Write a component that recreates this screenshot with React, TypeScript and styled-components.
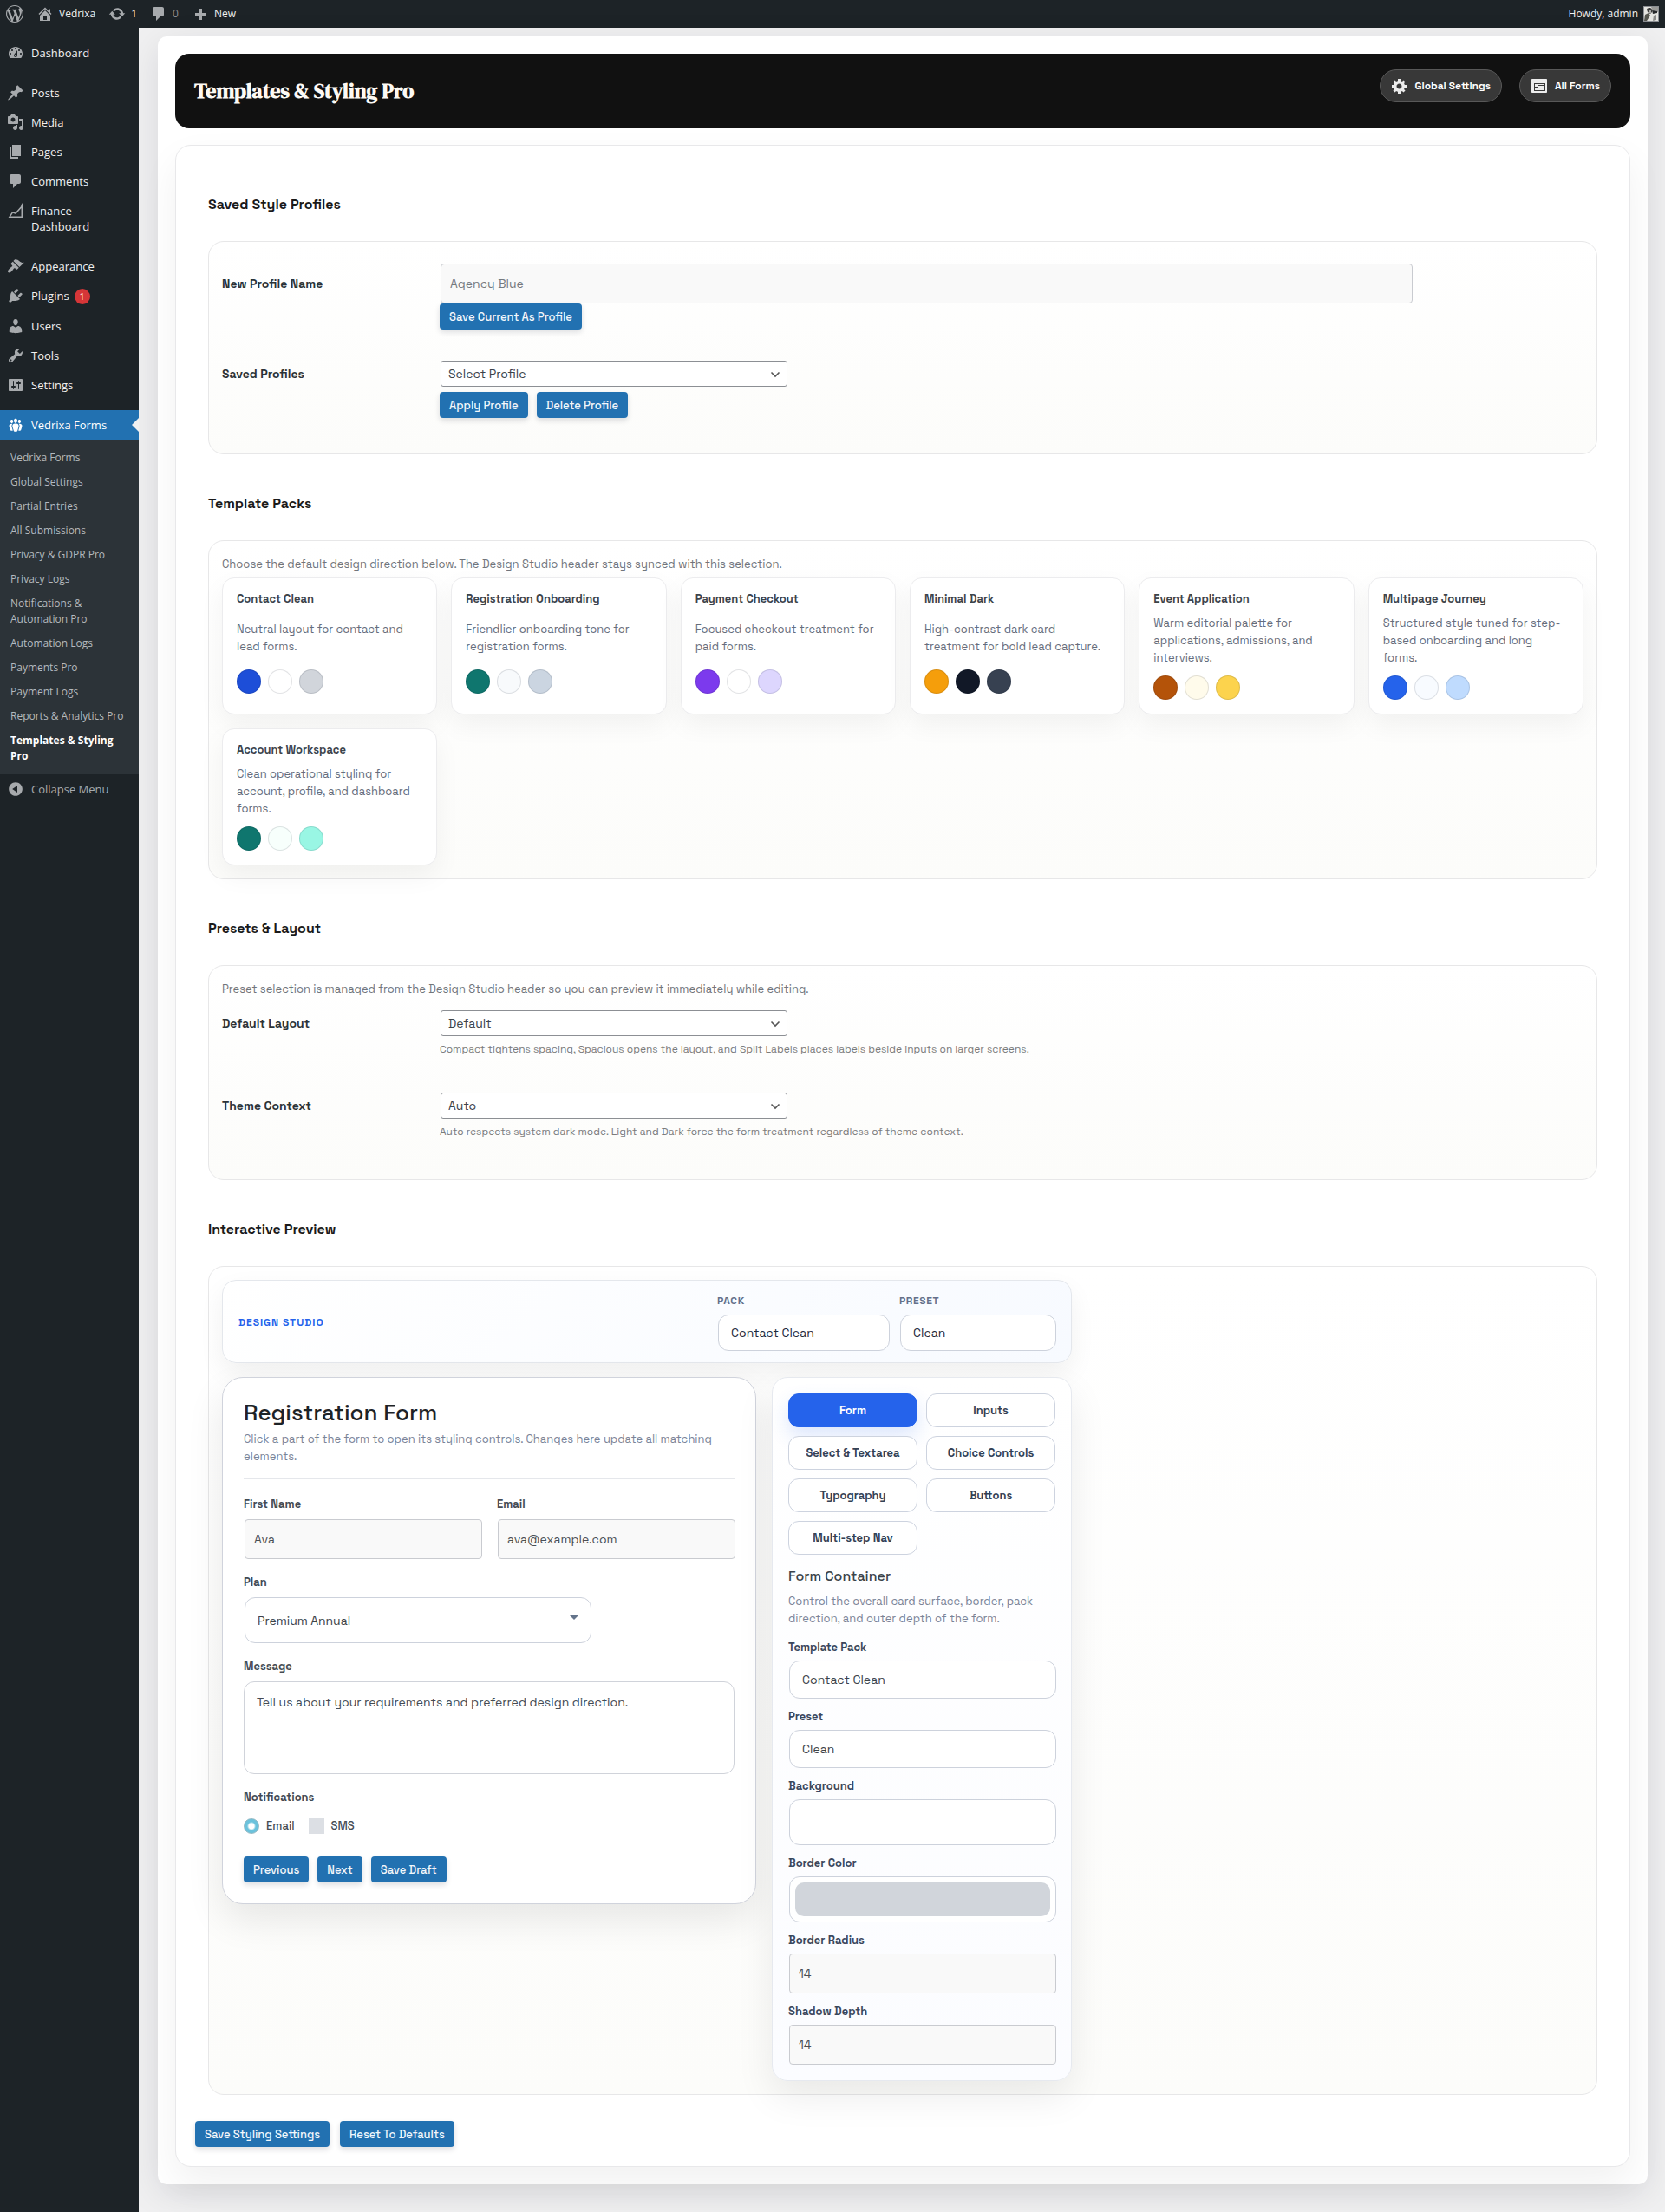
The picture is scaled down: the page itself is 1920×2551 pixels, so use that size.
import React from "react";
import styled, { createGlobalStyle, css } from "styled-components";

const SANS = `"Space Grotesk", Inter, "Liberation Sans", sans-serif`;
const ADMIN = `"Segoe UI", "Open Sans", "Noto Sans", sans-serif`;
const SERIF = `"DM Serif Display", "Liberation Serif", serif`;

const GlobalStyle = createGlobalStyle`
  *, *::before, *::after { box-sizing: border-box; }
  body {
    margin: 0;
    background: #f0f0f1;
    color: #3c434a;
    font-family: ${SANS};
    font-size: 13px;
    line-height: 20px;
  }
  h1, h2, h3, h4, p, ul { margin: 0; padding: 0; }
  ul { list-style: none; }
  a { color: inherit; text-decoration: none; }
  button, input, select, textarea { font-family: inherit; margin: 0; }
`;

/* ---------- icons ---------- */

const paths = {
  wordpress:
    "M20 10c0-5.51-4.49-10-10-10C4.48 0 0 4.49 0 10c0 5.52 4.48 10 10 10 5.51 0 10-4.48 10-10zM7.78 15.37L4.37 6.22c.55-.02 1.17-.08 1.17-.08.5-.06.44-1.13-.06-1.11 0 0-1.45.11-2.37.11-.18 0-.37 0-.58-.01C4.12 2.69 6.87 1.11 10 1.11c2.33 0 4.45.87 6.05 2.34-.68-.11-1.65.39-1.65 1.58 0 .74.45 1.36.9 2.1.35.61.55 1.36.55 2.46 0 1.49-1.4 5-1.4 5l-3.03-8.37c.54-.02.82-.17.82-.17.5-.05.44-1.25-.06-1.22 0 0-1.44.12-2.38.12-.87 0-2.33-.12-2.33-.12-.5-.03-.56 1.2-.06 1.22l.92.08 1.26 3.41zM17.41 10c.24-.64.74-1.87.43-4.25.7 1.29 1.05 2.71 1.05 4.25 0 3.29-1.73 6.24-4.4 7.78.97-2.59 1.94-5.2 2.92-7.78zM6.1 18.09C3.12 16.65 1.11 13.53 1.11 10c0-1.3.23-2.48.72-3.59C3.25 10.3 4.67 14.2 6.1 18.09zm4.03-6.63l2.58 6.98c-.86.29-1.76.45-2.71.45-.79 0-1.57-.11-2.29-.33.81-2.38 1.62-4.74 2.42-7.1z",
  home: "M16 8.5l1.53 1.53-1.06 1.06L10 4.6l-6.47 6.49-1.06-1.06L10 2.5l4 4v-2h2v4zm-6-2.46l6 5.99V18H4v-5.97zM12 17v-5H8v5h4z",
  update:
    "M10.2 3.28c3.53 0 6.43 2.61 6.92 6h2.08l-3.5 4-3.5-4h2.32c-.45-1.97-2.21-3.45-4.32-3.45-1.45 0-2.73.71-3.54 1.78L4.95 5.66C6.23 4.2 8.11 3.28 10.2 3.28zm-.4 13.44c-3.52 0-6.43-2.61-6.92-6H.8l3.5-4c1.17 1.33 2.33 2.67 3.5 4H5.48c.45 1.97 2.21 3.45 4.32 3.45 1.45 0 2.73-.71 3.54-1.78l1.71 1.95c-1.28 1.46-3.15 2.38-5.25 2.38z",
  plus: "M17 9v3h-5v5H9v-5H4V9h5V4h3v5h5z",
  dashboard:
    "M3.76 16h12.48c1.1-1.37 1.76-3.11 1.76-5 0-4.42-3.58-8-8-8s-8 3.58-8 8c0 1.89.66 3.63 1.76 5zM10 4c.55 0 1 .45 1 1s-.45 1-1 1-1-.45-1-1 .45-1 1-1zM6 6c.55 0 1 .45 1 1s-.45 1-1 1-1-.45-1-1 .45-1 1-1zm8 0c.55 0 1 .45 1 1s-.45 1-1 1-1-.45-1-1 .45-1 1-1zm-5.37 5.55L12 7v6c0 1.1-.9 2-2 2s-2-.9-2-2c0-.57.24-1.08.63-1.45zM4 10c.55 0 1 .45 1 1s-.45 1-1 1-1-.45-1-1 .45-1 1-1zm12 0c.55 0 1 .45 1 1s-.45 1-1 1-1-.45-1-1 .45-1 1-1zm-5 3c0-.55-.45-1-1-1s-1 .45-1 1 .45 1 1 1 1-.45 1-1z",
  post: "M10.44 3.02l1.82-1.82 6.36 6.35-1.83 1.82c-1.05-.68-2.48-.57-3.41.36l-.75.75c-.92.93-1.04 2.35-.35 3.41l-1.83 1.82-2.41-2.41-2.8 2.79c-.42.42-3.38 2.71-3.8 2.29s1.86-3.39 2.28-3.81l2.79-2.79L4.1 9.36l1.83-1.82c1.05.69 2.48.57 3.4-.36l.75-.75c.93-.92 1.05-2.35.36-3.41z",
  media:
    "M13 11V4c0-.55-.45-1-1-1h-1.67L9 1H5L3.67 3H2c-.55 0-1 .45-1 1v7c0 .55.45 1 1 1h10c.55 0 1-.45 1-1zM7 4.5c1.38 0 2.5 1.12 2.5 2.5S8.38 9.5 7 9.5 4.5 8.38 4.5 7 5.62 4.5 7 4.5zM14 6h5v10.5c0 1.38-1.12 2.5-2.5 2.5S14 17.88 14 16.5s1.12-2.5 2.5-2.5c.17 0 .34.02.5.05V9h-3V6zm-4 8.05V13h2v3.5c0 1.38-1.12 2.5-2.5 2.5S7 17.88 7 16.5 8.12 14 9.5 14c.17 0 .34.02.5.05z",
  page: "M6 15V2h10v13H6zm-1 1h8v2H3V5h2v11z",
  comments:
    "M5 2h9c1.1 0 2 .9 2 2v7c0 1.1-.9 2-2 2h-2l-5 5v-5H5c-1.1 0-2-.9-2-2V4c0-1.1.9-2 2-2z",
  chart:
    "M18 1l.9 3.1-.9.1v13.8H1.6l4.6-7.1 3.6 1.3L16.6 4.5l-.9-.3L18 1zM16.5 7l-6.2 7-3.5-1.3-2.5 3.8h12.2V7z",
  appearance:
    "M14.48 11.06L7.41 3.99l1.5-1.5c.5-.56 2.3-.47 3.51.32 1.21.8 1.43 1.28 2.91 2.1 1.18.64 2.45 1.26 4.45.85zm-.71.71L6.7 4.7 4.93 6.47c-.39.39-.39 1.02 0 1.41l1.06 1.06c.39.39.39 1.03 0 1.42-.6.6-1.43 1.11-2.21 1.69-.35.26-.7.53-1.01.84C1.43 14.23.4 16.08 1.4 17.07c.99 1 2.84-.03 4.18-1.36.31-.31.58-.66.85-1.02.57-.78 1.08-1.61 1.69-2.21.39-.39 1.02-.39 1.41 0l1.06 1.06c.39.39 1.02.39 1.41 0z",
  plugins:
    "M13.11 4.36L9.87 7.6 8 5.73l3.24-3.24c.35-.34 1.05-.2 1.56.32.52.51.66 1.21.31 1.55zm-8 1.77l.91-1.12 9.01 9.01-1.19.84c-.71.71-2.63 1.16-3.82 1.16H6.14L4.9 17.26c-.59.59-1.54.59-2.12 0-.59-.58-.59-1.53 0-2.12l1.24-1.24v-3.88c0-1.13.4-3.19 1.09-3.89zm7.26 3.97l3.24-3.24c.34-.35 1.04-.21 1.55.31.52.51.66 1.21.31 1.55l-3.24 3.25z",
  users:
    "M10 9.25c-2.27 0-2.73-3.44-2.73-3.44C7 4.02 7.82 2 9.97 2c2.16 0 2.98 2.02 2.71 3.81 0 0-.41 3.44-2.68 3.44zm0 2.57L12.72 10c2.39 0 4.52 2.33 4.52 4.53v2.49s-3.65 1.13-7.24 1.13c-3.65 0-7.24-1.13-7.24-1.13v-2.49c0-2.25 1.94-4.48 4.47-4.48z",
  tools:
    "M16.68 9.77c-1.34 1.34-3.3 1.67-4.95.99l-5.41 6.52c-.99.99-2.59.99-3.58 0s-.99-2.59 0-3.57l6.52-5.42c-.68-1.65-.35-3.61.99-4.95 1.28-1.28 3.12-1.62 4.72-1.06l-2.89 2.89 2.82 2.82 2.86-2.87c.53 1.58.18 3.39-1.08 4.65zM3.81 16.21c.4.39 1.04.39 1.43 0 .4-.4.4-1.04 0-1.43-.39-.4-1.03-.4-1.43 0-.39.39-.39 1.03 0 1.43z",
  settings:
    "M18 16V4c0-.55-.45-1-1-1H3c-.55 0-1 .45-1 1v12c0 .55.45 1 1 1h14c.55 0 1-.45 1-1zM8 11h1c.55 0 1 .45 1 1s-.45 1-1 1H8v1.5c0 .28-.22.5-.5.5s-.5-.22-.5-.5V13H6c-.55 0-1-.45-1-1s.45-1 1-1h1V5.5c0-.28.22-.5.5-.5s.5.22.5.5V11zm5-2h-1c-.55 0-1-.45-1-1s.45-1 1-1h1V5.5c0-.28.22-.5.5-.5s.5.22.5.5V7h1c.55 0 1 .45 1 1s-.45 1-1 1h-1v5.5c0 .28-.22.5-.5.5s-.5-.22-.5-.5V9z",
  groups:
    "M8.03 4.46c-.29 1.28.55 3.46 1.97 3.46 1.41 0 2.25-2.18 1.96-3.46-.22-.98-1.08-1.63-1.96-1.63-.89 0-1.74.65-1.97 1.63zm-4.13.9c-.25 1.08.47 2.93 1.67 2.93s1.92-1.85 1.67-2.93c-.19-.83-.92-1.39-1.67-1.39s-1.48.56-1.67 1.39zm8.86 0c-.25 1.08.47 2.93 1.66 2.93 1.2 0 1.92-1.85 1.67-2.93-.19-.83-.92-1.39-1.67-1.39-.74 0-1.47.56-1.66 1.39zm-.59 11.43l1.25-4.3C14.2 10 12.71 8.47 10 8.47c-2.72 0-4.21 1.53-3.44 4.02l1.26 4.3C8.05 17.51 9 18 10 18c.98 0 1.94-.49 2.17-1.21zm-6.1-7.63c-.49.67-.96 1.83-.42 3.59l1.12 3.79c-.34.2-.77.31-1.2.31-.85 0-1.65-.41-1.85-1.03l-1.07-3.65c-.65-2.11.61-3.4 2.92-3.4.27 0 .54.02.79.06-.1.1-.2.22-.29.33zm8.35-.39c2.31 0 3.58 1.29 2.92 3.4l-1.07 3.65c-.2.62-1 1.03-1.85 1.03-.43 0-.86-.11-1.2-.31l1.11-3.77c.55-1.78.08-2.94-.42-3.61-.08-.11-.18-.23-.28-.33.25-.04.51-.06.79-.06z",
  collapse:
    "M10 2.16c4.33 0 7.84 3.51 7.84 7.84s-3.51 7.84-7.84 7.84S2.16 14.33 2.16 10 5.71 2.16 10 2.16zm2 11.72V6.12L6.18 9.97z",
  generic:
    "M18 12h-2.18c-.17.7-.44 1.35-.81 1.93l1.54 1.54-2.1 2.1-1.54-1.54c-.58.36-1.23.63-1.91.79V19H8v-2.18c-.68-.16-1.33-.43-1.91-.79l-1.54 1.54-2.12-2.12 1.54-1.54c-.36-.58-.63-1.23-.79-1.91H1V9.03h2.17c.16-.7.44-1.35.8-1.94L2.43 5.55l2.1-2.1 1.54 1.54c.58-.37 1.24-.64 1.93-.81V2h3v2.18c.68.16 1.33.43 1.91.79l1.54-1.54 2.12 2.12-1.54 1.54c.36.59.64 1.24.8 1.94H18V12zm-8.5 1.5c1.66 0 3-1.34 3-3s-1.34-3-3-3-3 1.34-3 3 1.34 3 3 3z",
  feedback:
    "M2 2h16c.55 0 1 .45 1 1v14c0 .55-.45 1-1 1H2c-.55 0-1-.45-1-1V3c0-.55.45-1 1-1zm2 5v9h13V7H4zm1 1h3v3H5V8zm4 0h7v1H9V8zm0 2h7v2H9v-2zm-4 3h3v2H5v-2zm4 0h7v2H9v-2z",
};
type IconName = keyof typeof paths;

const IconSvg = styled.svg`
  display: block;
  flex: none;
  width: 20px;
  height: 20px;
  fill: currentColor;
`;

const Icon = ({ name }: { name: IconName }) => (
  <IconSvg viewBox="0 0 20 20" aria-hidden="true" fillRule="evenodd">
    <path d={paths[name]} />
  </IconSvg>
);

/* ---------- admin bar ---------- */

const AdminBar = styled.header`
  display: flex;
  justify-content: space-between;
  height: 32px;
  background: #1d2327;
  color: #f0f0f1;
  font-family: ${ADMIN};
  font-size: 12px;
`;

const BarGroup = styled.nav`
  display: flex;
  align-items: center;
`;

const BarLink = styled.a<{ $muted?: boolean }>`
  display: flex;
  align-items: center;
  gap: 6px;
  height: 32px;
  padding: 0 7px 0 8px;
  color: ${(p) => (p.$muted ? "#8c8f94" : "#f0f0f1")};

  svg { color: #a7aaad; }
  &:first-child { padding-left: 7px; }
`;

const Avatar = styled.svg`
  width: 18px;
  height: 18px;
  border: 1px solid #8c8f94;
`;

/* ---------- side menu ---------- */

const Shell = styled.div`
  display: flex;
  min-height: calc(100vh - 32px);
`;

const SideMenu = styled.nav`
  position: relative;
  z-index: 1;
  flex: none;
  width: 160px;
  padding-top: 12px;
  background: #1d2327;
  font-family: ${ADMIN};
`;

const MenuGroup = styled.ul`
  margin-bottom: 12px;
`;

const menuRow = css`
  display: flex;
  gap: 8px;
  width: 100%;
  padding: 8px 8px;
  font-size: 13px;
  line-height: 18px;
`;

const MenuLink = styled.a<{ $current?: boolean }>`
  ${menuRow}
  position: relative;
  color: ${(p) => (p.$current ? "#fff" : "#f0f0f1")};
  background: ${(p) => (p.$current ? "#2271b1" : "transparent")};

  svg {
    margin: -1px 0;
    color: ${(p) => (p.$current ? "#fff" : "#a7aaad")};
  }

  ${(p) =>
    p.$current &&
    css`
      &::after {
        content: "";
        position: absolute;
        right: 0;
        top: 9px;
        border: 8px solid transparent;
        border-right-color: #f0f0f1;
        border-left: 0;
      }
    `}
`;

const CountBadge = styled.span`
  display: inline-block;
  min-width: 18px;
  height: 18px;
  margin-left: 6px;
  border-radius: 9px;
  background: #d63638;
  color: #fff;
  font-size: 11px;
  text-align: center;
`;

const SubMenu = styled.ul`
  padding: 7px 0;
  background: #2c3338;
`;

const SubLink = styled.a<{ $current?: boolean }>`
  display: block;
  padding: 5px 8px 5px 12px;
  color: ${(p) => (p.$current ? "#fff" : "#b4b9be")};
  font-size: 12px;
  font-weight: ${(p) => (p.$current ? 700 : 400)};
  line-height: 18px;
`;

const CollapseButton = styled.button`
  ${menuRow}
  border: 0;
  background: none;
  color: #a7aaad;
  text-align: left;
  svg { margin: -1px 0; }
`;

/* ---------- page frame ---------- */

const Content = styled.main`
  flex: 1;
  min-width: 0;
  padding: 10px 20px 33px 22px;
`;

const Panel = styled.div`
  padding: 20px;
  border-radius: 10px;
  background: #fff;
  box-shadow: 0 10px 40px rgba(15, 23, 42, 0.1);
`;

const Hero = styled.header`
  display: flex;
  justify-content: space-between;
  align-items: flex-start;
  height: 86px;
  padding: 18px 22px;
  border-radius: 16px;
  background: #111;
`;

const HeroTitle = styled.h1`
  align-self: center;
  color: #fdfaf5;
  font-family: ${SERIF};
  font-size: 24px;
  font-weight: 700;
  line-height: 32px;
`;

const HeroActions = styled.div`
  display: flex;
  gap: 20px;
`;

const PillLink = styled.a`
  display: flex;
  align-items: center;
  gap: 8px;
  height: 38px;
  padding: 0 12px;
  border: 1px solid #585858;
  border-radius: 19px;
  background: #383838;
  color: #fff;
  font-size: 12px;
  font-weight: 700;
  svg { margin-right: 0; color: #ececec; }
`;

const SettingsCard = styled.form`
  margin-top: 19px;
  padding: 11px 22px 22px;
  border: 1px solid #e8e8ea;
  border-radius: 18px;
  background: #fff;
  box-shadow: 0 18px 44px rgba(0, 0, 0, 0.06);
`;

const Section = styled.section`
  margin: 0 15px;
  padding-top: 47px;
`;

const SectionTitle = styled.h2`
  margin-bottom: 32px;
  color: #1a1a1a;
  font-size: 16px;
  font-weight: 600;
  line-height: 20px;
`;

const Box = styled.div`
  padding: 15px;
  border: 1px solid #e7e7e8;
  border-radius: 18px;
  background: linear-gradient(180deg, #fff 0%, #fcfcfa 100%);
`;

const Intro = styled.p`
  padding: 2px 0 4px;
  color: #71757c;
  font-size: 13px;
`;

/* ---------- form rows and controls ---------- */

const Row = styled.div`
  display: grid;
  grid-template-columns: 251px minmax(0, 1fr);
  align-items: center;
  padding: 10px 0 26px;
`;

const RowLabel = styled.label`
  color: #2c3338;
  font-size: 14px;
  font-weight: 600;
`;

const RowExtra = styled.div<{ $gap?: number }>`
  grid-column: 2;
  display: flex;
  gap: 10px;
  margin-top: ${(p) => p.$gap ?? 0}px;
`;

const Help = styled.p`
  grid-column: 2;
  margin: 6px 0 5px;
  color: #7b7b7b;
  font-size: 12px;
  line-height: 18px;
`;

const ActionButton = styled.button`
  height: 30px;
  padding: 0 11px;
  border: 0;
  border-radius: 4px;
  background: #2271b1;
  color: #f3f7fb;
  font-size: 13px;
  font-weight: 500;
  box-shadow: 0 3px 6px rgba(15, 23, 42, 0.14);
`;

const TextInput = styled.input<{ $width?: string }>`
  display: block;
  width: ${(p) => p.$width ?? "100%"};
  height: 46px;
  margin-left: 1px;
  padding: 0 10px;
  border: 1px solid #c9cbd0;
  border-radius: 4px;
  background: #f9f9f9;
  color: #4a4f55;
  font-size: 14px;
  &::placeholder { color: #757a80; opacity: 1; }
  &::-webkit-inner-spin-button { appearance: none; }
`;

const CompactSelect = styled.select`
  appearance: none;
  display: block;
  width: 100%;
  height: 30px;
  padding: 0 24px 0 8px;
  border: 1px solid #8c8f94;
  border-radius: 3px;
  background: #fff;
  color: #3c434a;
  font-size: 14px;
`;

const Chevron = styled.svg`
  right: 8px;
  top: 10px;
  width: 12px;
  height: 12px;
  fill: none;
  stroke: #555;
  stroke-width: 1.6;
`;

const Caret = styled.svg`
  right: 14px;
  top: 20px;
  width: 12px;
  height: 6px;
  fill: #64748b;
`;

const RoundSelect = styled.select<{ $h: number; $w?: string }>`
  appearance: none;
  display: block;
  width: ${(p) => p.$w ?? "100%"};
  height: ${(p) => p.$h}px;
  margin-left: 1px;
  padding: 0 14px;
  border: 1px solid #cdd2dc;
  border-radius: 12px;
  background: #fff;
  color: #3c434a;
  font-size: 14px;
`;

const SelectWrap = styled.span`
  position: relative;
  display: block;
  width: 400px;
  max-width: 100%;
  margin-left: 1px;
  svg {
    position: absolute;
    pointer-events: none;
  }
  ${RoundSelect} { margin-left: 0; }
`;

const SmallLabel = styled.label`
  display: block;
  color: #444b54;
  font-size: 13px;
  font-weight: 600;
  line-height: 18px;
`;

/* ---------- template packs ---------- */

const PackGrid = styled.div`
  display: grid;
  grid-template-columns: repeat(auto-fill, minmax(220px, 1fr));
  gap: 16px;
  padding-top: 1px;
`;

const PackCard = styled.article`
  display: grid;
  gap: 10px;
  align-items: start;
  min-height: 158px;
  padding: 16px;
  border: 1px solid #ececee;
  border-radius: 14px;
  background: #fff;
  box-shadow: 0 12px 30px rgba(15, 15, 15, 0.05);
`;

const PackName = styled.h3`
  color: #3c434a;
  font-size: 13px;
  font-weight: 600;
  line-height: 16px;
`;

const PackText = styled.p`
  color: #666d7c;
  font-size: 13px;
`;

const Swatches = styled.div`
  display: flex;
  gap: 8px;
`;

const Swatch = styled.span<{ $color: string }>`
  width: 28px;
  height: 28px;
  border: 1px solid rgba(15, 23, 42, 0.12);
  border-radius: 50%;
  background: ${(p) => p.$color};
`;

/* ---------- interactive preview ---------- */

const Studio = styled.div`
  display: grid;
  grid-template-columns: minmax(0, 616fr) minmax(0, 346fr);
  gap: 16px 18px;
  align-items: start;
  max-width: 980px;
`;

const StudioBar = styled.div`
  grid-column: 1 / -1;
  display: flex;
  align-items: center;
  justify-content: space-between;
  padding: 14px 16px 13px 18px;
  border: 1px solid #e4e7ec;
  border-radius: 16px;
  background: linear-gradient(135deg, #fff 0%, #f7faff 100%);
  box-shadow: 0 12px 30px rgba(15, 15, 15, 0.06);
`;

const StudioName = styled.strong`
  color: #2563eb;
  font-size: 12px;
  font-weight: 600;
  letter-spacing: 1px;
`;

const StudioFields = styled.div`
  display: grid;
  grid-template-columns: 200px 182px;
  gap: 10px;
`;

const BarField = styled.div`
  display: grid;
  gap: 7px;
  select { color: #1e293b; }
`;

const BarLabel = styled(SmallLabel)`
  color: #64708a;
  font-size: 12px;
  letter-spacing: 0.05em;
`;

const FormCard = styled.div`
  padding: 24px;
  border: 1px solid #d0d3dc;
  border-radius: 24px;
  background: #fff;
  box-shadow: 0 18px 44px rgba(15, 15, 15, 0.09);
`;

const FormHead = styled.div`
  padding-bottom: 15px;
  border-bottom: 1px solid #e5e7eb;
  margin-bottom: 20px;
`;

const FormTitle = styled.h3`
  color: #1d2327;
  font-size: 26px;
  font-weight: 500;
  line-height: 32px;
`;

const MutedText = styled.p`
  color: #7b8498;
  font-size: 13px;
`;

const FormHeadText = styled(MutedText)`
  margin-top: 5px;
`;

const FieldStack = styled.div`
  display: grid;
  gap: 18px;
`;

const FieldPair = styled.div`
  display: grid;
  grid-template-columns: 1fr 1fr;
  gap: 18px;
`;

const Field = styled.div`
  display: grid;
  gap: 8px;
`;

const TextArea = styled.textarea`
  display: block;
  width: 100%;
  height: 107px;
  padding: 13px 14px;
  border: 1px solid #d0d3da;
  border-radius: 12px;
  background: #fff;
  color: #444b54;
  font-size: 14px;
  line-height: 20px;
  resize: none;
`;

const ChoiceGroup = styled.fieldset`
  margin: 0 0 26px;
  padding: 0;
  border: 0;
`;

const ChoiceLegend = styled.legend`
  padding: 0 0 15px;
  color: #444b54;
  font-size: 13px;
  font-weight: 600;
  line-height: 18px;
`;

const Choices = styled.div`
  display: flex;
  gap: 16px;
`;

const Choice = styled.label`
  display: flex;
  align-items: center;
  gap: 8px;
  color: #444b54;
  font-size: 13px;
  font-weight: 500;
  line-height: 18px;
`;

const Radio = styled.input`
  appearance: none;
  width: 18px;
  height: 18px;
  border: 1px solid #93b9c4;
  border-radius: 50%;
  background: #6bc2dc;
  &:checked { background: radial-gradient(circle, #fff 3px, #6bc2dc 5px); }
`;

const Check = styled.input`
  appearance: none;
  width: 18px;
  height: 18px;
  background: #dcdfe4;
`;

const ButtonRow = styled.div`
  display: flex;
  gap: 10px;
`;

const Inspector = styled.aside`
  padding: 18px;
  border: 1px solid #e6e9ef;
  border-radius: 18px;
  background: linear-gradient(180deg, #fff 0%, #fbfcff 100%);
  box-shadow: 0 18px 44px rgba(15, 15, 15, 0.08);
`;

const Tabs = styled.div`
  display: grid;
  grid-template-columns: 1fr 1fr;
  gap: 10px;
`;

const Tab = styled.button<{ $active?: boolean }>`
  height: 39px;
  padding: 0 6px;
  border: 1px solid ${(p) => (p.$active ? "#2563eb" : "#cdd3df")};
  border-radius: 12px;
  background: ${(p) => (p.$active ? "#2563eb" : "#fff")};
  color: ${(p) => (p.$active ? "#fff" : "#334155")};
  font-size: 13px;
  font-weight: 600;
  box-shadow: ${(p) => (p.$active ? "0 10px 22px rgba(37, 99, 235, 0.16)" : "none")};
`;

const InspectorTitle = styled.h4`
  margin: 14px 0 8px;
  color: #3c434a;
  font-size: 16px;
  font-weight: 500;
  line-height: 22px;
`;

const InspectorFields = styled.div`
  display: grid;
  gap: 12px;
  margin-top: 14px;
`;

const InspectorField = styled.div`
  display: grid;
  gap: 6px;
  label { color: #3b475c; }
`;

const ColorInput = styled.input`
  appearance: none;
  display: block;
  width: 100%;
  height: 53px;
  margin-left: 1px;
  padding: 6px;
  border: 1px solid #cdd2dc;
  border-radius: 12px;
  background: #fff;
  &::-webkit-color-swatch-wrapper { padding: 0; }
  &::-webkit-color-swatch { border: 0; border-radius: 10px; }
`;

const FooterActions = styled.div`
  display: flex;
  gap: 12px;
  margin-top: 30px;
`;

/* ---------- data ---------- */

const menuGroups: { icon: IconName; label: string; count?: number }[][] = [
  [{ icon: "dashboard", label: "Dashboard" }],
  [
    { icon: "post", label: "Posts" },
    { icon: "media", label: "Media" },
    { icon: "page", label: "Pages" },
    { icon: "comments", label: "Comments" },
    { icon: "chart", label: "Finance Dashboard" },
  ],
  [
    { icon: "appearance", label: "Appearance" },
    { icon: "plugins", label: "Plugins", count: 1 },
    { icon: "users", label: "Users" },
    { icon: "tools", label: "Tools" },
    { icon: "settings", label: "Settings" },
  ],
];

const subItems = [
  "Vedrixa Forms",
  "Global Settings",
  "Partial Entries",
  "All Submissions",
  "Privacy & GDPR Pro",
  "Privacy Logs",
  "Notifications & Automation Pro",
  "Automation Logs",
  "Payments Pro",
  "Payment Logs",
  "Reports & Analytics Pro",
  "Templates & Styling Pro",
];

const packs = [
  { name: "Contact Clean", text: "Neutral layout for contact and lead forms.", colors: ["#1d4ed8", "#ffffff", "#d1d5db"] },
  { name: "Registration Onboarding", text: "Friendlier onboarding tone for registration forms.", colors: ["#0f766e", "#f8fafc", "#cbd5e1"] },
  { name: "Payment Checkout", text: "Focused checkout treatment for paid forms.", colors: ["#7c3aed", "#ffffff", "#ddd6fe"] },
  { name: "Minimal Dark", text: "High-contrast dark card treatment for bold lead capture.", colors: ["#f59e0b", "#111827", "#374151"] },
  { name: "Event Application", text: "Warm editorial palette for applications, admissions, and interviews.", colors: ["#b45309", "#fffbeb", "#fcd34d"] },
  { name: "Multipage Journey", text: "Structured style tuned for step-based onboarding and long forms.", colors: ["#2563eb", "#f8fbff", "#bfdbfe"] },
  { name: "Account Workspace", text: "Clean operational styling for account, profile, and dashboard forms.", colors: ["#0f766e", "#f7fffc", "#99f6e4"] },
];

const tabs = ["Form", "Inputs", "Select & Textarea", "Choice Controls", "Typography", "Buttons", "Multi-step Nav"];

const AdminSelect = ({ id, value }: { id: string; value: string }) => (
  <SelectWrap>
    <CompactSelect id={id}>
      <option>{value}</option>
    </CompactSelect>
    <Chevron viewBox="0 0 12 12" aria-hidden="true">
      <path d="M1.5 3.5L6 8l4.5-4.5" />
    </Chevron>
  </SelectWrap>
);

export default function App() {
  return (
    <>
      <GlobalStyle />
      <AdminBar>
        <BarGroup aria-label="Site">
          <BarLink href="#" aria-label="About WordPress"><Icon name="wordpress" /></BarLink>
          <BarLink href="#"><Icon name="home" />Vedrixa</BarLink>
          <BarLink href="#"><Icon name="update" />1</BarLink>
          <BarLink href="#" $muted><Icon name="comments" />0</BarLink>
          <BarLink href="#"><Icon name="plus" />New</BarLink>
        </BarGroup>
        <BarGroup aria-label="Account">
          <BarLink href="#">
            Howdy, admin
            <Avatar viewBox="0 0 16 16" aria-hidden="true">
              <rect width="16" height="16" fill="#e4e4e0" />
              <path d="M8 0h8v6l-6-1z" fill="#9a9a98" />
              <path d="M3 3c0-2 5-3 6 0v3L7 8 4 6z" fill="#3b3b3b" />
              <path d="M5 4h3v3H6z" fill="#a8a8a6" />
              <path d="M1 9l4-2 2 3-4 6H0z" fill="#55564f" />
              <path d="M9 4l6 1v2l-5 1z" fill="#26282a" />
              <path d="M11 10l3-1v6l-4 1z" fill="#8c8c8a" />
            </Avatar>
          </BarLink>
        </BarGroup>
      </AdminBar>

      <Shell>
        <SideMenu aria-label="Main menu">
          {menuGroups.map((group, i) => (
            <MenuGroup key={i}>
              {group.map((item) => (
                <li key={item.label}>
                  <MenuLink href="#">
                    <Icon name={item.icon} />
                    <span>
                      {item.label}
                      {item.count && <CountBadge>{item.count}</CountBadge>}
                    </span>
                  </MenuLink>
                </li>
              ))}
            </MenuGroup>
          ))}
          <MenuLink href="#" $current aria-current="true">
            <Icon name="groups" />
            <span>Vedrixa Forms</span>
          </MenuLink>
          <SubMenu>
            {subItems.map((item, i) => (
              <li key={item}>
                <SubLink href="#" $current={i === subItems.length - 1}>{item}</SubLink>
              </li>
            ))}
          </SubMenu>
          <CollapseButton type="button">
            <Icon name="collapse" />
            <span>Collapse Menu</span>
          </CollapseButton>
        </SideMenu>

        <Content>
          <Panel>
            <Hero>
              <HeroTitle>Templates &amp; Styling Pro</HeroTitle>
              <HeroActions>
                <PillLink href="#"><Icon name="generic" />Global Settings</PillLink>
                <PillLink href="#"><Icon name="feedback" />All Forms</PillLink>
              </HeroActions>
            </Hero>

            <SettingsCard>
              <Section>
                <SectionTitle>Saved Style Profiles</SectionTitle>
                <Box>
                  <Row>
                    <RowLabel htmlFor="profile-name">New Profile Name</RowLabel>
                    <TextInput id="profile-name" placeholder="Agency Blue" $width="85%" />
                    <RowExtra>
                      <ActionButton type="button">Save Current As Profile</ActionButton>
                    </RowExtra>
                  </Row>
                  <Row>
                    <RowLabel htmlFor="saved-profiles">Saved Profiles</RowLabel>
                    <AdminSelect id="saved-profiles" value="Select Profile" />
                    <RowExtra $gap={6}>
                      <ActionButton type="button">Apply Profile</ActionButton>
                      <ActionButton type="button">Delete Profile</ActionButton>
                    </RowExtra>
                  </Row>
                </Box>
              </Section>

              <Section>
                <SectionTitle>Template Packs</SectionTitle>
                <Box>
                  <Intro>
                    Choose the default design direction below. The Design Studio header stays synced with this selection.
                  </Intro>
                  <PackGrid>
                    {packs.map((pack) => (
                      <PackCard key={pack.name}>
                        <PackName>{pack.name}</PackName>
                        <PackText>{pack.text}</PackText>
                        <Swatches>
                          {pack.colors.map((color) => (
                            <Swatch key={color} $color={color} />
                          ))}
                        </Swatches>
                      </PackCard>
                    ))}
                  </PackGrid>
                </Box>
              </Section>

              <Section>
                <SectionTitle>Presets &amp; Layout</SectionTitle>
                <Box>
                  <Intro>
                    Preset selection is managed from the Design Studio header so you can preview it immediately while editing.
                  </Intro>
                  <Row>
                    <RowLabel htmlFor="default-layout">Default Layout</RowLabel>
                    <AdminSelect id="default-layout" value="Default" />
                    <Help>
                      Compact tightens spacing, Spacious opens the layout, and Split Labels places labels beside inputs on larger screens.
                    </Help>
                  </Row>
                  <Row>
                    <RowLabel htmlFor="theme-context">Theme Context</RowLabel>
                    <AdminSelect id="theme-context" value="Auto" />
                    <Help>
                      Auto respects system dark mode. Light and Dark force the form treatment regardless of theme context.
                    </Help>
                  </Row>
                </Box>
              </Section>

              <Section>
                <SectionTitle>Interactive Preview</SectionTitle>
                <Box>
                  <Studio>
                    <StudioBar>
                      <StudioName>DESIGN STUDIO</StudioName>
                      <StudioFields>
                        <BarField>
                          <BarLabel htmlFor="bar-pack">PACK</BarLabel>
                          <RoundSelect id="bar-pack" $h={42} $w="198px"><option>Contact Clean</option></RoundSelect>
                        </BarField>
                        <BarField>
                          <BarLabel htmlFor="bar-preset">PRESET</BarLabel>
                          <RoundSelect id="bar-preset" $h={42} $w="180px"><option>Clean</option></RoundSelect>
                        </BarField>
                      </StudioFields>
                    </StudioBar>

                    <FormCard>
                      <FormHead>
                        <FormTitle>Registration Form</FormTitle>
                        <FormHeadText>
                          Click a part of the form to open its styling controls. Changes here update all matching elements.
                        </FormHeadText>
                      </FormHead>
                      <FieldStack>
                        <FieldPair>
                          <Field>
                            <SmallLabel htmlFor="first-name">First Name</SmallLabel>
                            <TextInput id="first-name" defaultValue="Ava" />
                          </Field>
                          <Field>
                            <SmallLabel htmlFor="email">Email</SmallLabel>
                            <TextInput id="email" type="email" defaultValue="ava@example.com" />
                          </Field>
                        </FieldPair>
                        <Field>
                          <SmallLabel htmlFor="plan">Plan</SmallLabel>
                          <SelectWrap>
                            <RoundSelect id="plan" $h={53}><option>Premium Annual</option></RoundSelect>
                            <Caret viewBox="0 0 12 6" aria-hidden="true"><path d="M0 0h12L6 6z" /></Caret>
                          </SelectWrap>
                        </Field>
                        <Field>
                          <SmallLabel htmlFor="message">Message</SmallLabel>
                          <TextArea id="message" defaultValue="Tell us about your requirements and preferred design direction." />
                        </Field>
                        <ChoiceGroup>
                          <ChoiceLegend>Notifications</ChoiceLegend>
                          <Choices>
                            <Choice><Radio type="radio" name="notify" defaultChecked />Email</Choice>
                            <Choice><Check type="checkbox" />SMS</Choice>
                          </Choices>
                        </ChoiceGroup>
                      </FieldStack>
                      <ButtonRow>
                        <ActionButton type="button">Previous</ActionButton>
                        <ActionButton type="button">Next</ActionButton>
                        <ActionButton type="button">Save Draft</ActionButton>
                      </ButtonRow>
                    </FormCard>

                    <Inspector>
                      <Tabs>
                        {tabs.map((tab, i) => (
                          <Tab type="button" key={tab} $active={i === 0}>{tab}</Tab>
                        ))}
                      </Tabs>
                      <InspectorTitle>Form Container</InspectorTitle>
                      <MutedText>
                        Control the overall card surface, border, pack direction, and outer depth of the form.
                      </MutedText>
                      <InspectorFields>
                        <InspectorField>
                          <SmallLabel htmlFor="template-pack">Template Pack</SmallLabel>
                          <RoundSelect id="template-pack" $h={44}><option>Contact Clean</option></RoundSelect>
                        </InspectorField>
                        <InspectorField>
                          <SmallLabel htmlFor="preset">Preset</SmallLabel>
                          <RoundSelect id="preset" $h={44}><option>Clean</option></RoundSelect>
                        </InspectorField>
                        <InspectorField>
                          <SmallLabel htmlFor="background">Background</SmallLabel>
                          <ColorInput id="background" type="color" defaultValue="#ffffff" />
                        </InspectorField>
                        <InspectorField>
                          <SmallLabel htmlFor="border-color">Border Color</SmallLabel>
                          <ColorInput id="border-color" type="color" defaultValue="#d1d5db" />
                        </InspectorField>
                        <InspectorField>
                          <SmallLabel htmlFor="border-radius">Border Radius</SmallLabel>
                          <TextInput id="border-radius" type="number" defaultValue={14} />
                        </InspectorField>
                        <InspectorField>
                          <SmallLabel htmlFor="shadow-depth">Shadow Depth</SmallLabel>
                          <TextInput id="shadow-depth" type="number" defaultValue={14} />
                        </InspectorField>
                      </InspectorFields>
                    </Inspector>
                  </Studio>
                </Box>
              </Section>

              <FooterActions>
                <ActionButton type="submit">Save Styling Settings</ActionButton>
                <ActionButton type="reset">Reset To Defaults</ActionButton>
              </FooterActions>
            </SettingsCard>
          </Panel>
        </Content>
      </Shell>
    </>
  );
}
